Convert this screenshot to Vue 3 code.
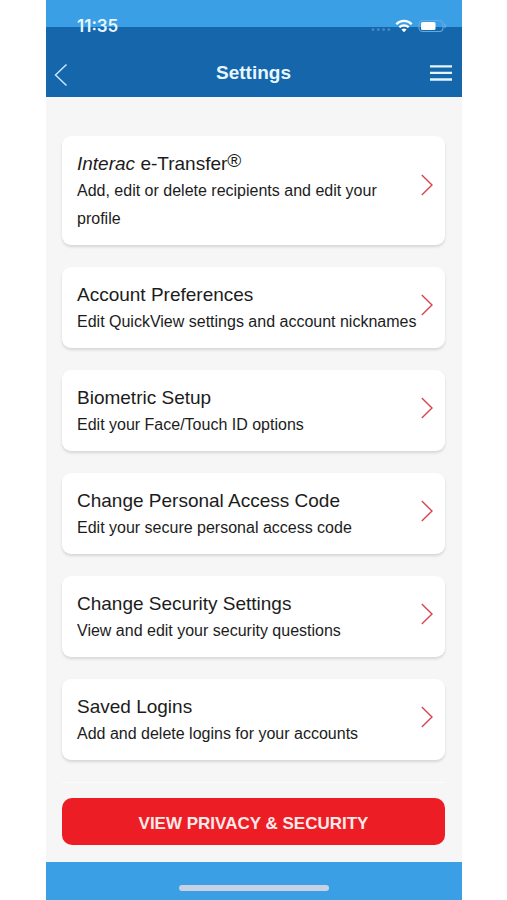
<script setup>
const items = [
  { brand: 'Interac', title: 'e-Transfer', mark: '®', text: 'Add, edit or delete recipients and edit your profile' },
  { title: 'Account Preferences', text: 'Edit QuickView settings and account nicknames' },
  { title: 'Biometric Setup', text: 'Edit your Face/Touch ID options' },
  { title: 'Change Personal Access Code', text: 'Edit your secure personal access code' },
  { title: 'Change Security Settings', text: 'View and edit your security questions' },
  { title: 'Saved Logins', text: 'Add and delete logins for your accounts' },
]
</script>

<template>
  <div class="page">
    <div class="phone">
      <header class="top">
        <div class="status">
          <span class="time">11:35</span>
          <span class="indicators">
            <svg width="20" height="14" viewBox="0 0 20 14" aria-hidden="true">
              <g fill="#4088c8">
                <circle cx="2" cy="10.5" r="1.5" /><circle cx="7.3" cy="10.5" r="1.5" />
                <circle cx="12.6" cy="10.5" r="1.5" /><circle cx="17.9" cy="10.5" r="1.5" />
              </g>
            </svg>
            <svg class="wifi" width="18" height="14" viewBox="0 0 18 14" aria-hidden="true">
              <g fill="none" stroke="#fff" stroke-width="2.3">
                <path d="M1.3 5.2 C5.5 0.7 12.5 0.7 16.7 5.2" />
                <path d="M4.3 8.3 C7 5.6 11 5.6 13.7 8.3" />
              </g>
              <path d="M6.4 10.4 C8 9.1 10 9.1 11.6 10.4 L9 13.2 Z" fill="#fff" />
            </svg>
            <svg width="29" height="14" viewBox="0 0 29 14" aria-hidden="true">
              <rect x="1" y="1.5" width="24" height="11" rx="3.5" fill="none" stroke="#62abe2" stroke-width="1.1" />
              <path d="M26.3 4.6 C29 5.6 29 8.4 26.3 9.4 Z" fill="#62abe2" />
              <rect x="3" y="3" width="14.5" height="8" rx="1.5" fill="#fff" />
            </svg>
          </span>
        </div>
        <div class="nav">
          <button class="icon-button" type="button" aria-label="Back">
            <svg width="14" height="24" viewBox="0 0 14 24" aria-hidden="true">
              <path d="M12.5 1.5 L1.5 12 L12.5 22.5" fill="none" stroke="#c4e8ff" stroke-width="1.5" />
            </svg>
          </button>
          <h1>Settings</h1>
          <button class="icon-button menu" type="button" aria-label="Menu">
            <svg width="24" height="18" viewBox="0 0 24 18" aria-hidden="true">
              <path d="M1 2.3 H23 M1 8.8 H23 M1 15.5 H23" stroke="#e2f6ff" stroke-width="2.3" />
            </svg>
          </button>
        </div>
      </header>

      <main>
        <nav class="list" aria-label="Settings">
          <a v-for="item in items" :key="item.title" class="card" href="#">
            <span class="copy">
              <span class="title"><template v-if="item.brand"><em>{{ item.brand }}</em>{{ ' ' }}</template>{{ item.title }}<sup v-if="item.mark">{{ item.mark }}</sup></span>
              <span class="text">{{ item.text }}</span>
            </span>
            <span class="chevron">
              <svg width="12" height="22" viewBox="0 0 12 22" aria-hidden="true">
                <path d="M0.8 1 L11 11 L0.8 21" fill="none" stroke="#d64550" stroke-width="1.4" />
              </svg>
            </span>
          </a>
        </nav>
        <hr />
        <button class="primary" type="button">VIEW PRIVACY &amp; SECURITY</button>
      </main>

      <footer><span class="home"></span></footer>
    </div>
  </div>
</template>

<style>
body {
  background: #fff;
}
</style>

<style scoped>
.page {
  display: flex;
  min-height: 100vh;
  padding: 0 45px 0 46px;
  box-sizing: border-box;
  font-family: "Liberation Sans", Arial, sans-serif;
  color: #1c1c1c;
}
.phone {
  flex: 1;
  min-width: 0;
  display: flex;
  flex-direction: column;
  background: #f6f6f6;
}
.top {
  background: linear-gradient(#3b9fe6 27px, #1566ab 27px);
}
.status {
  display: flex;
  justify-content: space-between;
  align-items: center;
  padding: 16px 15px 0 31px;
  height: 20px;
}
.time {
  font: 600 17px/20px Inter, sans-serif;
  color: #e8f6ff;
}
.indicators {
  display: flex;
  align-items: center;
}
.wifi {
  margin: 0 5px 0 4px;
}
.nav {
  display: grid;
  grid-template-columns: 32px 1fr 32px;
  align-items: center;
  height: 48px;
  padding: 0 9px 0 8px;
  margin-top: 13px;
}
h1 {
  margin: 0;
  text-align: center;
  font-size: 19px;
  line-height: 24px;
  color: #e6f7ff;
}
.icon-button {
  display: flex;
  padding: 4px 0 0;
  border: 0;
  background: none;
  cursor: pointer;
}
.menu {
  justify-content: flex-end;
  padding: 0;
}
main {
  flex: 1;
  padding: 39px 17px 16px 16px;
}
.list {
  display: grid;
  gap: 22px;
}
.card {
  display: flex;
  padding: 15px 12px 12px 15px;
  border-radius: 9px;
  background: #fff;
  box-shadow: 0 2px 3px rgba(0, 0, 0, 0.13);
  color: inherit;
  text-decoration: none;
}
.copy {
  flex: 1;
  min-width: 0;
}
.title,
.text {
  display: block;
}
.title {
  font-size: 19px;
  line-height: 26px;
}
.text {
  font-size: 16px;
  line-height: 28px;
}
sup {
  font-size: 19px;
  line-height: 0;
  vertical-align: 3px;
}
.chevron {
  display: grid;
  grid-template-rows: 5fr 22px 8fr;
}
.chevron svg {
  grid-row: 2;
}
hr {
  margin: 22px 0 15px;
  border: 0;
  border-top: 1px solid #fcfcfc;
}
.primary {
  display: block;
  width: 100%;
  padding: 14px 12px 10px;
  border: 0;
  border-radius: 10px;
  background: #ed1d26;
  color: #ffe9e9;
  font: bold 17px/23px "Liberation Sans", Arial, sans-serif;
  cursor: pointer;
}
footer {
  display: flex;
  justify-content: center;
  padding: 23px 0 9px;
  background: #3b9fe6;
}
.home {
  width: 36%;
  height: 6px;
  border-radius: 3px;
  background: #c6d1e4;
}
</style>
